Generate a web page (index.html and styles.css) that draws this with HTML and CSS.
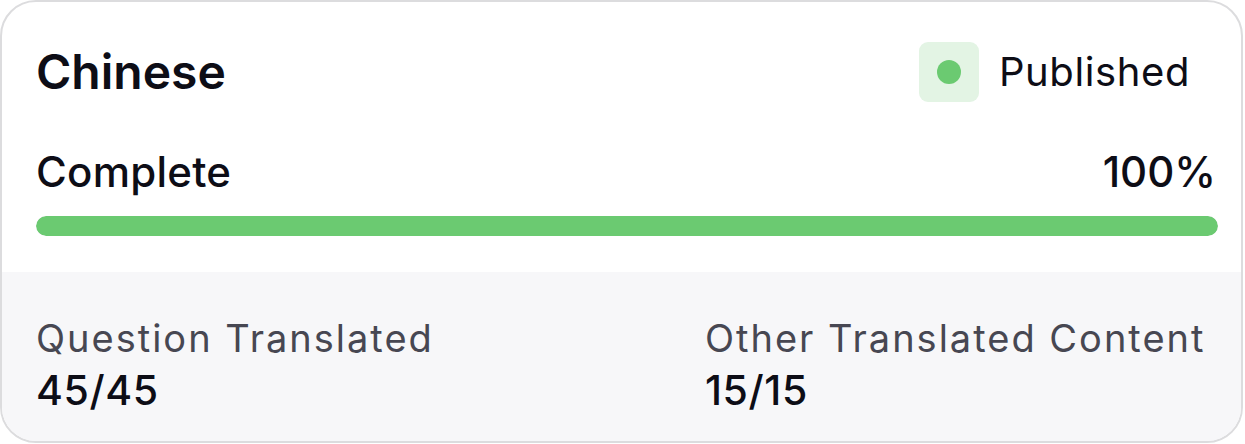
FILE: index.html
```html
<!DOCTYPE html>
<html lang="en">
<head>
<meta charset="utf-8">
<title>Chinese translation</title>
<link rel="stylesheet" href="styles.css">
</head>
<body>
<div class="card">
  <div class="top">
    <div class="head">
      <h2 class="title">Chinese</h2>
      <div class="status">
        <span class="status-icon"><span class="dot"></span></span>
        <span class="status-text">Published</span>
      </div>
    </div>
    <div class="progress-row">
      <span class="progress-label">Complete</span>
      <span>100%</span>
    </div>
    <div class="bar"><div class="bar-fill" style="width:100%"></div></div>
  </div>
  <div class="bottom">
    <div class="stat">
      <div class="stat-label">Question Translated</div>
      <div class="stat-value">45/45</div>
    </div>
    <div class="stat">
      <div class="stat-label">Other Translated Content</div>
      <div class="stat-value">15/15</div>
    </div>
  </div>
</div>
</body>
</html>
```
FILE: styles.css
```css
* { box-sizing: border-box; }
html, body { margin: 0; padding: 0; background: #ffffff; }
body { font-family: Inter, "Noto Sans", sans-serif; color: #0d0d16; }

.card {
  width: 1243px;
  height: 443px;
  border: 2px solid #dcdcde;
  border-radius: 36px;
  overflow: hidden;
  display: flex;
  flex-direction: column;
  background: #ffffff;
}

.top { padding: 40px 23px 36px 34px; }

.head {
  display: flex;
  justify-content: space-between;
  align-items: center;
  height: 60px;
}
.title {
  margin: 0;
  font-size: 48px;
  font-weight: 600;
  line-height: 60px;
}
.status {
  display: flex;
  align-items: center;
  gap: 20px;
  margin-right: 28px;
}
.status-icon {
  width: 60px;
  height: 60px;
  border-radius: 9px;
  background: #e3f4e4;
  display: flex;
  align-items: center;
  justify-content: center;
}
.dot { width: 24px; height: 24px; border-radius: 50%; background: #6bca71; }
.status-text { font-size: 40px; font-weight: 400; line-height: 48px; letter-spacing: 0.6px; }

.progress-row {
  margin-top: 45px;
  display: flex;
  justify-content: space-between;
  font-size: 42px;
  font-weight: 500;
  line-height: 50px;
  padding-right: 2px;
}
.progress-label { letter-spacing: 0.25px; }
.bar {
  margin-top: 19px;
  height: 20px;
  border-radius: 10px;
  background: #e8e8ec;
  overflow: hidden;
}
.bar-fill { height: 100%; border-radius: 10px; background: #6bca71; }

.bottom {
  flex: 1;
  background: #f7f7f9;
  padding: 43px 23px 0 34px;
  display: grid;
  grid-template-columns: 669px 1fr;
}
.stat-label { font-size: 38px; line-height: 46px; color: #474752; letter-spacing: 2px; }
.stat-value { margin-top: 5px; font-size: 41px; line-height: 48px; font-weight: 500; letter-spacing: 0.6px; }
```
